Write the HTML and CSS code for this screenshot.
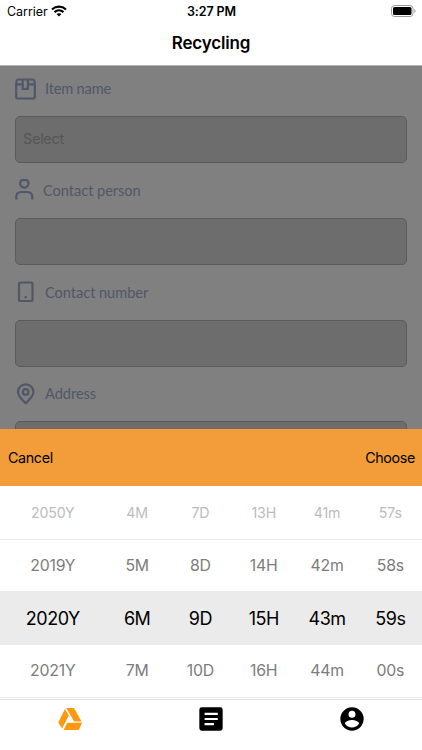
FILE: index.html
```html
<!DOCTYPE html>
<html lang="en">
<head>
<meta charset="utf-8">
<title>Recycling</title>
<link rel="stylesheet" href="styles.css">
</head>
<body>
<div class="screen">
  <header class="status">
    <div class="carrier"><span>Carrier</span>
      <svg class="wifi" width="16" height="12" viewBox="0 0 16 12"><path d="M1 4.400C5 .7 11 .7 15 4.400M3.500 7.100c2.600-2.300 6.400-2.300 9 0" fill="none" stroke="#000" stroke-width="2.100"/><path d="M5.500 9.100c1.500-1.200 3.500-1.200 5 0L8 11.600z"/></svg>
    </div>
    <div class="time">3:27 PM</div>
    <svg class="battery" width="25" height="12" viewBox="0 0 25 12"><rect x=".5" y=".5" width="21.500" height="11" rx="3" fill="#fff" stroke="#999"/><rect x="2" y="2" width="18.500" height="8" rx="1.500"/><path d="M23.300 4v4q1.200-.6 1.200-2t-1.200-2" fill="#999"/></svg>
  </header>
  <h1 class="title">Recycling</h1>
  <main class="form">
    <section class="field">
      <div class="label item"><svg width="21" height="22" viewBox="0 0 21 22"><path d="M1.200 6.200v12.600q0 1.700 1.700 1.700h15.200q1.700 0 1.700-1.700V6.200L19.500 3q-.5-1.500-2-1.500H3.500q-1.500 0-2 1.500zM1.200 6.300h6.500M13 6.300h6.800M7.700 1.500v9.300h5.200V1.500"/></svg><span>Item name</span></div>
      <div class="input">Select</div>
    </section>
    <section class="field">
      <div class="label person"><svg width="19" height="22" viewBox="0 0 19 22"><path d="M6.600 1.200a4.200 4.200 0 1 0 5.400 0zM1.300 20.500V18q0-5 5-5h6q5 0 5 5v2.500"/></svg><span>Contact person</span></div>
      <div class="input"></div>
    </section>
    <section class="field">
      <div class="label phone"><svg width="21" height="22" viewBox="0 0 21 22"><rect x="4" y="1.500" width="13.500" height="18.500" rx="1.500"/><path d="M9.500 16.200h2.300"/></svg><span>Contact number</span></div>
      <div class="input"></div>
    </section>
    <section class="field">
      <div class="label address"><svg width="21" height="22" viewBox="0 0 21 22"><path d="M10.700 20.300C7.500 17.200 3 13.200 3 9a7.700 7.700 0 0 1 15.400 0c0 4.200-4.500 8.200-7.700 11.300z"/><circle cx="10.700" cy="8.900" r="2.800"/></svg><span>Address</span></div>
      <div class="input"></div>
    </section>
  </main>
  <section class="picker">
    <div class="actions"><span>Cancel</span><span>Choose</span></div>
    <div class="row far"><span>2050Y</span><span>4M</span><span>7D</span><span>13H</span><span>41m</span><span>57s</span></div>
    <div class="row near"><span>2019Y</span><span>5M</span><span>8D</span><span>14H</span><span>42m</span><span>58s</span></div>
    <div class="row selected"><span>2020Y</span><span>6M</span><span>9D</span><span>15H</span><span>43m</span><span>59s</span></div>
    <div class="row near"><span>2021Y</span><span>7M</span><span>10D</span><span>16H</span><span>44m</span><span>00s</span></div>
  </section>
  <nav class="tabs">
    <div><svg width="26" height="24" viewBox="0 0 26 24" fill="#fc990f"><path d="M8 2l3.800 6.500L5.100 21.500 1.200 15.500zM9.200 1h7.800l7.500 13.600h-7.300zM10.400 15.800h14.800L21.600 23H6.500z"/></svg></div>
    <div><svg width="28" height="28" viewBox="0 0 24 24"><path d="M20 2H4a2 2 0 0 0-2 2v16a2 2 0 0 0 2 2h16a2 2 0 0 0 2-2V4a2 2 0 0 0-2-2zm-5.500 15.300H6.500v-1.800h8zm3.300-4.400H6.500v-1.800h11.300zm0-4.400H6.500V6.700h11.300z"/></svg></div>
    <div><svg width="28" height="28" viewBox="0 0 24 24"><path d="M12 2a10 10 0 1 0 0 20 10 10 0 0 0 0-20zm0 3a3 3 0 1 1 0 6 3 3 0 0 1 0-6zm0 14.200a7.200 7.200 0 0 1-6-3.220c.03-1.990 4-3.080 6-3.080s5.970 1.090 6 3.080a7.200 7.200 0 0 1-6 3.220z"/></svg></div>
  </nav>
</div>
</body>
</html>
```

FILE: styles.css
```css
* { box-sizing: border-box; }
body { margin: 0; font-family: Inter, "Liberation Sans", sans-serif; color: #000; }
svg { display: block; flex: none; }
.screen { width: 422px; height: 750px; overflow: hidden; display: flex; flex-direction: column; background: #fff; }
.status { height: 22px; flex: none; display: grid; grid-template-columns: 1fr auto 1fr; align-items: center; padding: 0 6px 0 7px; font-size: 12.5px; }
.carrier { display: flex; align-items: center; gap: 3px; letter-spacing: -.05px; }
.carrier svg { margin-bottom: 1px; }
.time { font-weight: 600; letter-spacing: -.1px; }
.battery { justify-self: end; margin-bottom: 1px; }
.title { flex: none; height: 44px; margin: 0; border-bottom: 1px solid #b4b4b4; text-align: center; font-size: 17px; line-height: 43px; font-weight: 600; letter-spacing: -.15px; }
.form { flex: none; height: 363px; overflow: hidden; background: #808080; padding: 0 15px; }
.field { height: 101.8px; }
.label { height: 50px; padding-bottom: 5px; display: flex; align-items: center; color: #505768; font: 14.6px/20px Lato, "Liberation Sans", sans-serif; letter-spacing: -.04px; }
.label span { padding-top: 1px; }
.label svg { fill: none; stroke: #505768; stroke-width: 2.200; margin-right: 9px; }
.item span { letter-spacing: -.18px; }
.input { height: 47px; border: 1px solid #5b5b5b; border-radius: 5px; background: #6d6d6d; color: #565656; padding-left: 7px; font-size: 14.5px; line-height: 44px; letter-spacing: -.3px; }
.picker { flex: none; height: 270px; background: #fff; }
.actions { height: 57px; padding: 0 7px 0 8px; display: flex; align-items: center; justify-content: space-between; background: #f29d39; font-size: 14.3px; letter-spacing: -.35px; }
.row { height: 52.700px; display: grid; grid-template-columns: 5fr repeat(5, 3fr); align-items: center; text-align: center; border-bottom: 1px solid #ebebeb; letter-spacing: -.2px; }
.far { height: 53.5px; color: #bcbcbc; font-size: 14.200px; padding-top: 1px; }
.near { color: #7c7c7c; font-size: 15.8px; }
.selected { background: #ebebeb; font-size: 18px; letter-spacing: -.5px; }
.tabs { flex: 1; border-top: 1px solid #dedede; display: grid; grid-template-columns: repeat(3, 1fr); justify-items: center; align-items: start; padding-top: 5px; }
.tabs div { height: 28px; display: flex; align-items: center; }
```
